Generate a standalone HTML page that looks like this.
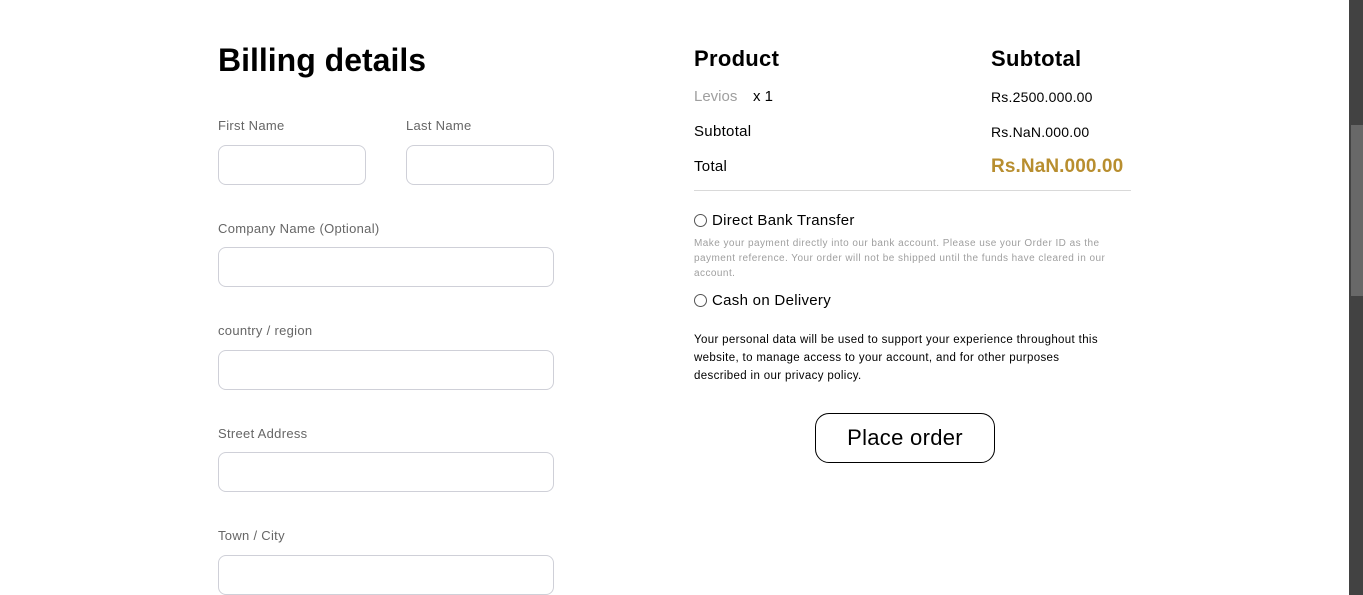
<!DOCTYPE html>
<html><head><meta charset="utf-8"><style>
*{margin:0;padding:0;box-sizing:border-box}
body{width:1363px;height:595px;overflow:hidden;background:#fff;font-family:"Liberation Sans",sans-serif;position:relative;color:#000}
.a{position:absolute;white-space:nowrap}
.lbl{font-size:13px;color:#666;letter-spacing:0.3px}
.in{position:absolute;border:1px solid #cfd0d8;border-radius:8px;height:40px;background:#fff}
.r{position:absolute;width:13px;height:13px;border:1px solid #555;border-radius:50%}
</style></head><body>
<div class="a" style="left:218px;top:42px;font-size:32px;font-weight:bold;letter-spacing:0px">Billing details</div>
<div class="a lbl" style="left:218px;top:118px">First Name</div>
<div class="a lbl" style="left:406px;top:118px">Last Name</div>
<div class="in" style="left:218px;top:145px;width:148px"></div>
<div class="in" style="left:406px;top:145px;width:148px"></div>
<div class="a lbl" style="left:218px;top:221px">Company Name (Optional)</div>
<div class="in" style="left:218px;top:247px;width:336px"></div>
<div class="a lbl" style="left:218px;top:323px">country / region</div>
<div class="in" style="left:218px;top:350px;width:336px"></div>
<div class="a lbl" style="left:218px;top:426px">Street Address</div>
<div class="in" style="left:218px;top:452px;width:336px"></div>
<div class="a lbl" style="left:218px;top:528px">Town / City</div>
<div class="in" style="left:218px;top:555px;width:336px"></div>

<div class="a" style="left:694px;top:46px;font-size:22px;font-weight:bold;letter-spacing:0.3px">Product</div>
<div class="a" style="left:991px;top:46px;font-size:22px;font-weight:bold;letter-spacing:0.3px">Subtotal</div>
<div class="a" style="left:694px;top:88px;font-size:15px;color:#9f9f9f">Levios</div>
<div class="a" style="left:753px;top:88px;font-size:15px">x 1</div>
<div class="a" style="left:991px;top:89px;font-size:14px;letter-spacing:0.2px">Rs.2500.000.00</div>
<div class="a" style="left:694px;top:123px;font-size:15px;letter-spacing:0.3px">Subtotal</div>
<div class="a" style="left:991px;top:124px;font-size:14px;letter-spacing:0.2px">Rs.NaN.000.00</div>
<div class="a" style="left:694px;top:158px;font-size:15px;letter-spacing:0.3px">Total</div>
<div class="a" style="left:991px;top:156px;font-size:19px;font-weight:bold;color:#b88e2f;letter-spacing:0.1px">Rs.NaN.000.00</div>
<div class="a" style="left:694px;top:190px;width:437px;height:1px;background:#d9d9d9"></div>
<div class="r" style="left:694px;top:214px"></div>
<div class="a" style="left:712px;top:212px;font-size:15px;letter-spacing:0.3px">Direct Bank Transfer</div>
<div class="a" style="left:694px;top:236px;font-size:10px;line-height:15px;color:#9f9f9f;white-space:normal;width:430px;letter-spacing:0.45px">Make your payment directly into our bank account. Please use your Order ID as the payment reference. Your order will not be shipped until the funds have cleared in our account.</div>
<div class="r" style="left:694px;top:294px"></div>
<div class="a" style="left:712px;top:292px;font-size:15px;letter-spacing:0.3px">Cash on Delivery</div>
<div class="a" style="left:694px;top:331px;font-size:11.5px;line-height:18px;white-space:normal;width:412px;letter-spacing:0.35px">Your personal data will be used to support your experience throughout this website, to manage access to your account, and for other purposes described in our privacy policy.</div>
<div class="a" style="left:815px;top:413px;width:180px;height:50px;border:1px solid #000;border-radius:14px;font-size:22px;text-align:center;line-height:48px;letter-spacing:0.3px">Place order</div>

<div class="a" style="left:1349px;top:0;width:14px;height:595px;background:#424242"></div>
<div class="a" style="left:1351px;top:125px;width:12px;height:171px;background:#686868"></div>
</body></html>
